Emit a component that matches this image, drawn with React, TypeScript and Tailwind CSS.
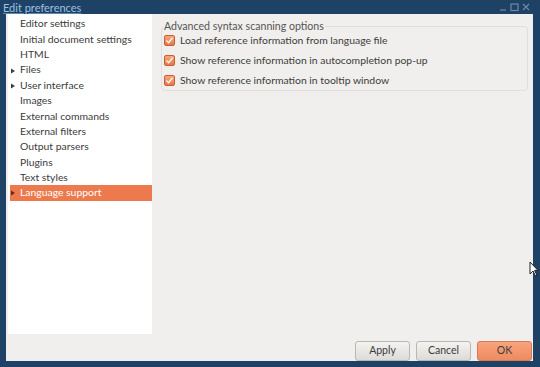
const categories = [
  { label: 'Editor settings' },
  { label: 'Initial document settings' },
  { label: 'HTML' },
  { label: 'Files', expandable: true },
  { label: 'User interface', expandable: true },
  { label: 'Images' },
  { label: 'External commands' },
  { label: 'External filters' },
  { label: 'Output parsers' },
  { label: 'Plugins' },
  { label: 'Text styles' },
  { label: 'Language support', expandable: true, selected: true },
];

const options = [
  'Load reference information from language file',
  'Show reference information in autocompletion pop-up',
  'Show reference information in tooltip window',
];

function Checkbox() {
  return (
    <span className="flex size-[11px] shrink-0 items-center justify-center rounded-[2px] border border-[#c8602f] bg-gradient-to-b from-[#f6a57c] to-[#e9784a]">
      <svg viewBox="0 0 10 10" className="size-[9px]">
        <path d="M1.5 5 L4 7.5 L8.5 2" fill="none" stroke="#fff6f0" strokeWidth="1.6" />
      </svg>
    </span>
  );
}

function Button({ children, primary }: { children: string; primary?: boolean }) {
  return (
    <button
      className={
        primary
          ? 'h-[20px] w-[55px] rounded-[3px] border border-[#d97a52] bg-gradient-to-b from-[#f7a47f] to-[#ef8a5f] text-[10.5px] text-[#3c3c3c]'
          : 'h-[20px] w-[55px] rounded-[3px] border border-[#b9b7b2] bg-gradient-to-b from-[#f4f3f1] to-[#dddbd7] text-[10.5px] text-[#3c3c3c]'
      }
    >
      {children}
    </button>
  );
}

export default function App() {
  return (
    <div className="relative flex h-[367px] w-[540px] flex-col bg-[#1e4266] font-['Lato','Noto_Sans',sans-serif]">
      <div className="flex h-[14px] items-center justify-between pl-[3px] pr-[8px]">
        <span className="text-[11px] leading-none text-[#9dc0e3] underline decoration-[#5f87ad]">Edit preferences</span>
        <svg viewBox="0 0 34 10" className="h-[10px] w-[34px]">
          <path d="M2 8 H8" stroke="#6f8aa5" strokeWidth="1.2" />
          <rect x="13" y="2" width="7" height="6.5" fill="none" stroke="#6f8aa5" strokeWidth="1.2" />
          <path d="M25 2 L31 8 M31 2 L25 8" stroke="#6f8aa5" strokeWidth="1.2" />
        </svg>
      </div>
      <div className="mb-[6px] ml-[6px] mr-[7px] flex flex-1 flex-col bg-[#f0efed] text-[10.4px] text-[#3c3c3c]">
        <div className="flex flex-1 pl-[2px] pr-[5px]">
          <ul className="mb-[7px] w-[144px] bg-white pt-[2.5px]">
            {categories.map((c) => (
              <li
                key={c.label}
                className={
                  c.selected
                    ? 'relative ml-[2px] flex h-[15.36px] items-center bg-[#ec7a4c] pl-[10px] text-white'
                    : 'relative ml-[2px] flex h-[15.36px] items-center pl-[10px]'
                }
              >
                {c.expandable && (
                  <svg viewBox="0 0 5 6" className="absolute left-[1px] top-[5px] h-[6px] w-[4px]">
                    <path d="M0 0 L5 3 L0 6 Z" fill={c.selected ? '#6a2a10' : '#3c3c3c'} />
                  </svg>
                )}
                {c.label}
              </li>
            ))}
          </ul>
          <div className="ml-[9px] flex-1 pt-[5px]">
            <fieldset className="h-[72px] rounded-[4px] border border-[#e1dfdb] pb-[4px] pl-[2px] pr-[3px]">
              <legend className="ml-[-1px] px-[1px] text-[10.6px] text-[#555]">Advanced syntax scanning options</legend>
              <div className="flex flex-col gap-[9px]">
                {options.map((o) => (
                  <label key={o} className="flex items-center gap-[5px] leading-[11px]">
                    <Checkbox />
                    <span>{o}</span>
                  </label>
                ))}
              </div>
            </fieldset>
          </div>
        </div>
        <div className="flex justify-end gap-[6px] pr-[1px]">
          <Button>Apply</Button>
          <Button>Cancel</Button>
          <Button primary>OK</Button>
        </div>
      </div>
      <svg viewBox="0 0 10 16" className="absolute left-[529px] top-[261px] h-[16px] w-[10px]">
        <path d="M1 1 L1 13 L4 10 L6.5 15 L8 14.3 L5.6 9.4 L9 9.4 Z" fill="#fff" stroke="#222" strokeWidth="1" />
      </svg>
    </div>
  );
}
